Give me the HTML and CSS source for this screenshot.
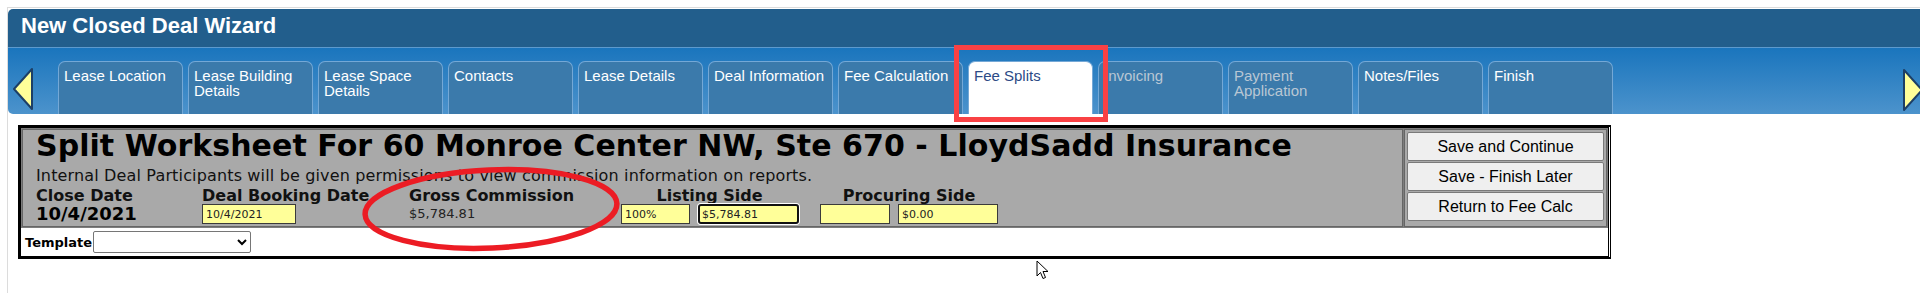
FILE: index.html
```html
<!DOCTYPE html>
<html lang="en">
<head>
    <meta charset="UTF-8">
    <title>New Closed Deal Wizard</title>
    <link rel="stylesheet" href="styles.css">
</head>
<body>
    <div class="wizard">
        <div class="wizard-title">New Closed Deal Wizard</div>
        <div class="tab-band">
            <span class="nav-arrow nav-prev">
                <svg width="22" height="44" viewBox="0 0 22 44"><polygon points="2,22 20,2 20,42" fill="#ffff99" stroke="#1d3f66" stroke-width="2" stroke-linejoin="round"/></svg>
            </span>
            <div class="tabs">
                <div class="tab">Lease Location</div>
                <div class="tab">Lease Building<br>Details</div>
                <div class="tab">Lease Space<br>Details</div>
                <div class="tab">Contacts</div>
                <div class="tab">Lease Details</div>
                <div class="tab">Deal Information</div>
                <div class="tab">Fee Calculation</div>
                <div class="tab active">Fee Splits</div>
                <div class="tab disabled">Invoicing</div>
                <div class="tab disabled">Payment<br>Application</div>
                <div class="tab">Notes/Files</div>
                <div class="tab">Finish</div>
            </div>
            <span class="nav-arrow nav-next">
                <svg width="22" height="44" viewBox="0 0 22 44"><polygon points="20,22 2,2 2,42" fill="#ffff99" stroke="#1d3f66" stroke-width="2" stroke-linejoin="round"/></svg>
            </span>
        </div>

        <div class="worksheet">
            <div class="ws-top">
                <div class="ws-info">
                    <h1>Split Worksheet For 60 Monroe Center NW, Ste 670 - LloydSadd Insurance</h1>
                    <p class="ws-note">Internal Deal Participants will be given permissions to view commission information on reports.</p>
                    <div class="ws-fields">
                        <div class="lbl">Close Date</div>
                        <div class="lbl">Deal Booking Date</div>
                        <div class="lbl">Gross Commission</div>
                        <div class="lbl center">Listing Side</div>
                        <div class="lbl center side-gap">Procuring Side</div>

                        <div class="val big">10/4/2021</div>
                        <div class="val"><input class="field w-date" type="text" value="10/4/2021"></div>
                        <div class="val money">$5,784.81</div>
                        <div class="val pair">
                            <input class="field w-pct" type="text" value="100%">
                            <input class="field w-amt focused" type="text" value="$5,784.81">
                        </div>
                        <div class="val pair side-gap">
                            <input class="field w-pct2" type="text" value="">
                            <input class="field w-amt2" type="text" value="$0.00">
                        </div>
                    </div>
                </div>
                <div class="ws-actions">
                    <button>Save and Continue</button>
                    <button>Save - Finish Later</button>
                    <button>Return to Fee Calc</button>
                </div>
            </div>
            <div class="ws-template">
                <label for="template">Template</label>
                <select id="template"><option></option></select>
            </div>
        </div>
    </div>

    <!-- annotations drawn over the screenshot -->
    <div class="mark-rect"></div>
    <svg class="mark-ellipse" width="270" height="96" viewBox="0 0 270 96">
        <ellipse cx="135" cy="48" rx="126" ry="39" fill="none" stroke="#ec1c24" stroke-width="5.5" transform="rotate(-2.5 135 48)"/>
    </svg>
    <svg class="pointer" width="14" height="20" viewBox="0 0 14 20">
        <path d="M1 1 L1 16 L4.5 12.5 L7 18.5 L9.5 17.5 L7 11.5 L12 11.5 Z" fill="#fff" stroke="#000" stroke-width="1" stroke-linejoin="round"/>
    </svg>
</body>
</html>
```

FILE: styles.css
```css
body {
    margin: 0;
    font-family: "Liberation Sans", Arial, sans-serif;
    background-color: #fff;
    position: relative;
}

.wizard {
    margin: 7px 0 0 7px;
    padding-top: 1px;
    border-top: 1px solid #dcdcdc;
    border-left: 1px solid #dcdcdc;
    min-height: 284px;
}

.wizard-title {
    height: 38px;
    padding-left: 13px;
    background-color: #225e8c;
    border-bottom: 1px solid #5d9acd;
    border-radius: 5px 0 0 0;
    color: #fff;
    font-size: 22px;
    font-weight: bold;
    line-height: 34px;
}

.tab-band {
    display: flex;
    height: 66px;
    box-sizing: border-box;
    padding: 13px 0 0 4px;
    background: linear-gradient(#1a75bd, #4c93cc);
    border-radius: 0 0 0 5px;
    overflow: hidden;
}

.nav-arrow {
    flex: none;
    width: 22px;
    height: 44px;
    margin-top: 6px;
}

.nav-prev {
    margin-right: 24px;
}

.nav-next {
    width: 18px;
    margin-left: auto;
    margin-top: 7px;
    overflow: hidden;
}

.tabs {
    display: flex;
    gap: 5px;
}

.tab {
    width: 125px;
    box-sizing: border-box;
    padding: 6px 0 0 5px;
    border: 1px solid #74a8d6;
    border-bottom: none;
    border-radius: 7px 7px 0 0;
    background-color: #3b7aab;
    color: #fff;
    font-size: 15px;
    line-height: 15px;
}

.tab.active {
    background-color: #fff;
    color: #2c4a86;
}

.tab.disabled {
    color: #b9c7d4;
}

/* worksheet */
.worksheet {
    width: 1593px;
    box-sizing: border-box;
    margin: 11px 0 0 10px;
    border: 3px solid #000;
    border-right-style: double;
}

.ws-top {
    display: flex;
    padding: 1px;
    background-color: #7d7d7d;
}

.ws-info {
    flex: 1;
    padding: 0 0 2px 13px;
    background-color: #a9a9a9;
    border: 1px solid #666;
    font-family: "DejaVu Sans", Verdana, sans-serif;
    color: #000;
}

.ws-info h1 {
    margin: 0;
    font-size: 30px;
    line-height: 32px;
    letter-spacing: 0.05px;
}

.ws-note {
    margin: 6px 0 0;
    font-size: 16px;
    line-height: 16px;
    letter-spacing: 0.15px;
    color: #111;
}

.ws-fields {
    display: grid;
    grid-template-columns: 166px 207px 212px 177px 200px;
    grid-template-rows: 17px 20px;
    margin-top: 3px;
}

.lbl {
    font-size: 16px;
    font-weight: bold;
    line-height: 17px;
    white-space: nowrap;
    color: #111;
}

.center {
    text-align: center;
}

.side-gap {
    padding-left: 22px;
}

.val {
    display: flex;
    align-items: flex-start;
    line-height: 20px;
}

.val.big {
    font-size: 18px;
    font-weight: bold;
}

.val.money {
    font-size: 13px;
    color: #222;
}

.pair {
    gap: 8px;
}

.field {
    height: 20px;
    box-sizing: border-box;
    margin: 0;
    padding: 0 3px;
    border: 1px solid #3a3a3a;
    background-color: #ffff99;
    font-family: "DejaVu Sans", Verdana, sans-serif;
    font-size: 11px;
    color: #222;
    outline: none;
}

.field.focused {
    border: 2px solid #111;
    border-radius: 3px;
    box-shadow: 0 0 0 1px #fff;
    padding-left: 2px;
}

.w-date { width: 94px; }
.w-pct { width: 69px; }
.w-amt { width: 101px; }
.w-pct2 { width: 70px; }
.w-amt2 { width: 100px; }

.ws-actions {
    width: 203px;
    box-sizing: border-box;
    margin-left: 1px;
    padding: 2px 2px 4px;
    background-color: #a9a9a9;
    border: 1px solid #666;
}

.ws-actions button {
    display: block;
    width: 100%;
    height: 29px;
    margin: 0 0 1px;
    padding: 0;
    background-color: #efefef;
    border: 1px solid #7a7a7a;
    border-radius: 2px;
    font-family: "Liberation Sans", Arial, sans-serif;
    font-size: 16px;
    color: #000;
}

.ws-template {
    display: flex;
    align-items: center;
    height: 28px;
    padding-left: 4px;
    font-family: "DejaVu Sans", Verdana, sans-serif;
}

.ws-template label {
    font-size: 13px;
    font-weight: bold;
    color: #000;
}

.ws-template select {
    width: 158px;
    height: 22px;
    margin-left: 1px;
    background-color: #fff;
    border: 1px solid #767676;
    border-radius: 2px;
}

/* annotations */
.mark-rect {
    position: absolute;
    left: 954px;
    top: 45px;
    width: 154px;
    height: 77px;
    box-sizing: border-box;
    border: 5px solid #f94144;
}

.mark-ellipse {
    position: absolute;
    left: 356px;
    top: 161px;
}

.pointer {
    position: absolute;
    left: 1036px;
    top: 260px;
}
```
